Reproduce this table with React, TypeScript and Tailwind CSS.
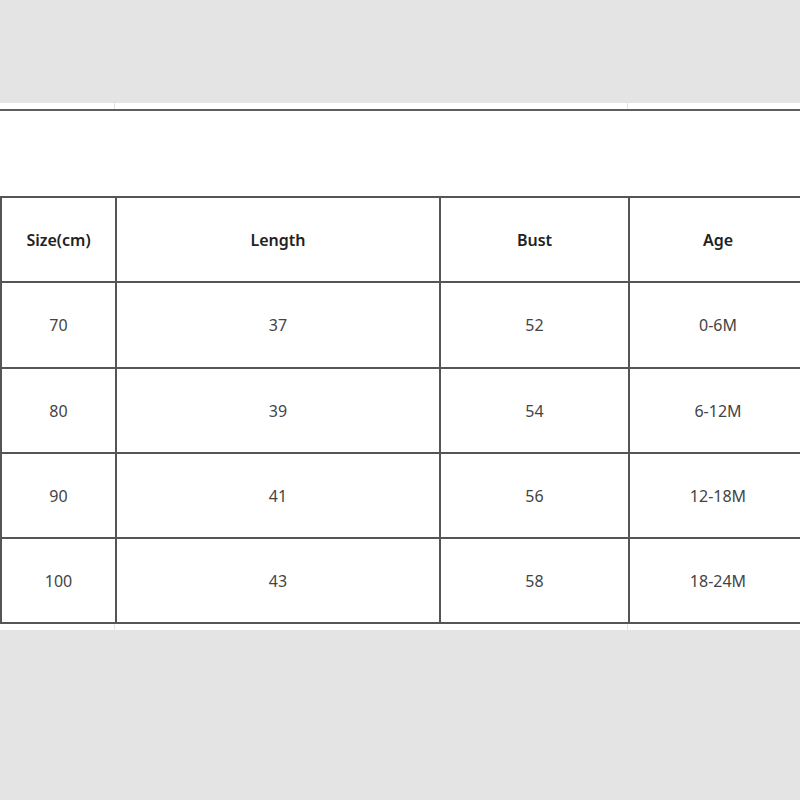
const headers = ["Size(cm)", "Length", "Bust", "Age"];

const rows = [
    ["70", "37", "52", "0-6M"],
    ["80", "39", "54", "6-12M"],
    ["90", "41", "56", "12-18M"],
    ["100", "43", "58", "18-24M"],
];

// faint spreadsheet gridline strip above/below the chart
function Strip({ height }: { height: string }) {
    return (
        <div className={`bg-white ${height} grid grid-cols-[115px_513px_1fr]`}>
            <div className="border-r border-[#e2e2e2]" />
            <div className="border-r border-[#e2e2e2]" />
            <div />
        </div>
    );
}

export default function App() {
    return (
        <div className="w-[800px] h-[800px] overflow-hidden bg-[#e4e4e4] flex flex-col font-['Noto_Sans','Liberation_Sans',sans-serif]">
            <div className="h-[103px] shrink-0 bg-[#e4e4e4]" />
            <Strip height="h-[6px]" />
            <div className="h-[2px] bg-[#5e5e5e] shrink-0" />
            <div className="h-[85px] bg-white shrink-0" />

            <div className="w-[806px] shrink-0 bg-[#555] grid grid-cols-[113px_322px_187px_176px] gap-[2px] p-[2px] pr-0">
                {headers.map((h) => (
                    <div key={h} className="bg-white h-[83px] flex items-center justify-center text-[16px] font-semibold text-[#222]">
                        {h}
                    </div>
                ))}
                {rows.map((row, i) =>
                    row.map((cell, j) => (
                        <div
                            key={`${i}-${j}`}
                            className={`bg-white ${i === 0 ? "h-[84px]" : "h-[83px]"} flex items-center justify-center text-[16px] text-[#444]`}
                        >
                            {cell}
                        </div>
                    ))
                )}
            </div>

            <Strip height="h-[6px]" />
            <div className="flex-1 bg-[#e4e4e4]" />
        </div>
    );
}
